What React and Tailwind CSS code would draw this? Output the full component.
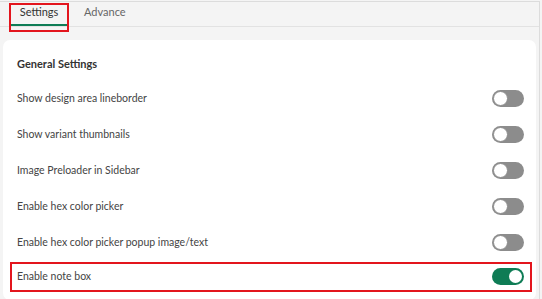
import React from 'react'

const ROWS = [
  { label: 'Show design area lineborder', on: false },
  { label: 'Show variant thumbnails', on: false },
  { label: 'Image Preloader in Sidebar', on: false },
  { label: 'Enable hex color picker', on: false },
  { label: 'Enable hex color picker popup image/text', on: false },
  { label: 'Enable note box', on: true, marked: true },
]

function Toggle({ on }) {
  return (
    <span
      className={
        'relative inline-flex h-[17px] w-[32px] shrink-0 items-center rounded-full ' +
        (on ? 'justify-end bg-[#0e7c55]' : 'justify-start bg-[#8c8c8c]')
      }
    >
      <span
        className={
          'rounded-full bg-white ' +
          (on ? 'mr-[2px] h-[13px] w-[13px]' : 'ml-[1px] h-[15px] w-[15px] border border-[#8c8c8c]')
        }
      />
    </span>
  )
}

export default function App() {
  return (
    <div className="h-[299px] w-[542px] overflow-hidden bg-[#f4f4f4] font-['Lato',sans-serif] text-[#3a3a3a]">
      <div className="mt-px flex h-full w-[540px] flex-col border-r border-t border-[#dcdcdc]">
        <div className="flex h-[25px] shrink-0 items-end border-b border-[#e2e2e2] pl-[11px]">
          <div className="relative flex h-full w-[56px] flex-col items-center">
            <span className="pt-[2px] text-[11px] text-[#333]">Settings</span>
            <span className="absolute bottom-0 left-0 h-[2px] w-full bg-[#0e7c55]" />
            <span className="pointer-events-none absolute -left-[2px] -right-[2px] top-[1px] h-[29px] border-2 border-[#e3151d]" />
          </div>
          <div className="flex h-full items-start pl-[17px] pt-[2px] text-[11px] text-[#666]">Advance</div>
        </div>
        <div className="shrink-0 px-[3px] pt-[13px]">
          <div className="rounded-[7px] bg-white pb-[8px] pl-[14px] pr-[12px] pt-[16px]">
            <div className="mb-[8px] text-[11px] font-bold text-[#333]">General Settings</div>
            <div className="flex flex-col">
              {ROWS.map((r) => (
                <div
                  key={r.label}
                  className={
                    'flex shrink-0 items-center justify-between ' +
                    (r.marked
                      ? '-ml-[7px] -mr-[8px] mt-px h-[30px] border-2 border-[#e3151d] pl-[5px] pr-[6px]'
                      : 'h-[36px]')
                  }
                >
                  <span className="text-[10.5px] text-[#444]">{r.label}</span>
                  <Toggle on={r.on} />
                </div>
              ))}
            </div>
          </div>
        </div>
      </div>
    </div>
  )
}
